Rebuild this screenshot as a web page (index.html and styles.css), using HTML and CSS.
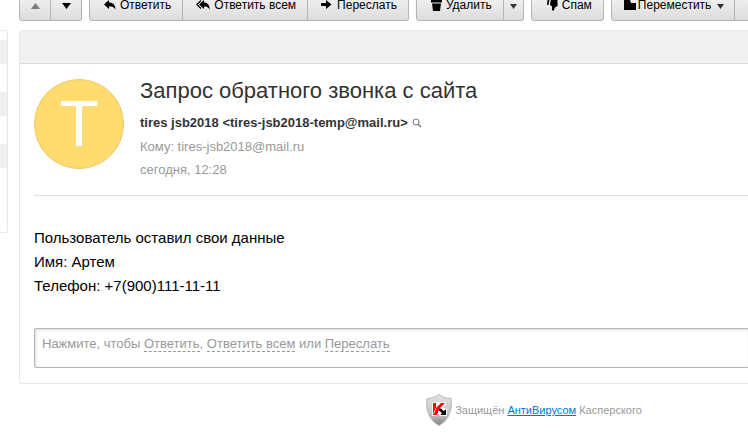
FILE: index.html
```html
<!DOCTYPE html>
<html lang="ru">
<head>
<meta charset="utf-8">
<title>Запрос обратного звонка с сайта</title>
<link rel="stylesheet" href="styles.css">
</head>
<body>
<div class="page">
  <aside class="sidebar">
    <div class="stripe"></div>
    <div class="stripe"></div>
    <div class="stripe"></div>
  </aside>
  <div class="main">
    <div class="toolbar">
      <div class="group">
        <button class="btn btn-nav" aria-label="Предыдущее" disabled><svg width="9" height="6" viewBox="0 0 9 6"><path d="M0 6L4.500 0L9 6Z" fill="#7d7d7d"/></svg></button>
        <button class="btn btn-nav" aria-label="Следующее"><svg width="9" height="6" viewBox="0 0 9 6"><path d="M0 0L4.500 6L9 0Z"/></svg></button>
      </div>
      <div class="group">
        <button class="btn btn-reply"><svg width="12" height="10" viewBox="0 0 12 10"><path d="M0 4.500L5 0V2.500C9 2.500 11.500 5 11.500 9.500C10 7 8 6.500 5 6.500V9Z"/></svg>Ответить</button>
        <button class="btn btn-replyall"><svg width="14" height="10" viewBox="0 0 14 10"><path d="M3 4.500L8 0V2.500C11.500 2.500 13.500 5 13.800 9.500C12 7 10.500 6.500 8 6.500V9Z"/><path d="M5 0.500L0.800 4.500L5 8.500" fill="none" stroke="#000" stroke-width="1.200"/></svg>Ответить всем</button>
        <button class="btn btn-forward"><svg width="11" height="10" viewBox="0 0 11 10"><path d="M0 3H5V0L10.500 4.500L5 9V6H0Z"/></svg>Переслать</button>
      </div>
      <div class="group">
        <button class="btn btn-delete"><svg width="11" height="12" viewBox="0 0 11 12"><path d="M3 0H8V1H11V3.500H0V1H3ZM1 4.500H10L9 12H2Z"/></svg>Удалить</button>
        <button class="btn btn-arrow" aria-label="Другие действия"><svg width="7" height="5" viewBox="0 0 7 5"><path d="M0 0H7L3.500 5Z" fill="#333"/></svg></button>
      </div>
      <div class="group">
        <button class="btn btn-spam"><svg width="11" height="12" viewBox="0 0 11 12"><path d="M0.500 1H2.500L1.500 6H0ZM4 0H10.500V7L8 8.500L6.500 12L5 11V7.500L3 6Z"/></svg>Спам</button>
      </div>
      <div class="group">
        <button class="btn btn-move"><svg width="12" height="10" viewBox="0 0 12 10"><path d="M0 0H6L7 3H12V10H0Z"/></svg>Переместить<svg class="caret" width="7" height="5" viewBox="0 0 7 5"><path d="M0 0H7L3.500 5Z" fill="#333"/></svg></button>
        <button class="btn btn-nav" aria-label="Ещё"></button>
      </div>
    </div>
    <main class="panel">
      <div class="panel-bar"></div>
      <article class="letter">
        <header class="head">
          <div class="avatar">Т</div>
          <div class="info">
            <h1>Запрос обратного звонка с сайта</h1>
            <p class="from">tires jsb2018 &lt;tires-jsb2018-temp@mail.ru&gt;<svg width="10" height="10" viewBox="0 0 10 10"><circle cx="4" cy="4" r="3" fill="none" stroke="#777"/><path d="M6 6L9 9" stroke="#777" stroke-width="1.500"/></svg></p>
            <p class="meta">Кому: tires-jsb2018@mail.ru</p>
            <p class="meta">сегодня, 12:28</p>
          </div>
        </header>
        <div class="body">Пользователь оставил свои данные<br>Имя: Артем<br>Телефон: +7(900)111-11-11</div>
        <div class="reply">Нажмите, чтобы <a href="#">Ответить</a>, <a href="#">Ответить всем</a> или <a href="#">Переслать</a></div>
      </article>
    </main>
    <footer class="footer">
      <svg width="28" height="34" viewBox="0 0 28 34">
        <defs><linearGradient id="shield" x1="0" y1="0" x2="0" y2="1"><stop offset="0" stop-color="#e2e2e2"/><stop offset=".6" stop-color="#c8c8c8"/><stop offset="1" stop-color="#808080"/></linearGradient></defs>
        <path d="M14 1.500C17 4 21 5.500 26 5.500C27.500 17 24 27 14 32.500C4 27 0.500 17 2 5.500C7 5.500 11 4 14 1.500Z" fill="url(#shield)" stroke="#b5b5b5"/>
        <path d="M7 9H21V11L18 15L22 16V23H15L13.500 21L12 23H7Z" fill="#fff"/>
        <path d="M8 10H11V15L16 10H20L14 16L12 22H8Z" fill="#f00"/>
        <path d="M11 15L8.500 21" stroke="#fff" stroke-width=".8"/>
        <path d="M14 15.500L16 15.500L18.500 18L21 16.500V22H15.500L17 20L14 17.500Z"/>
      </svg>
      <span>Защищён <a href="#">АнтиВирусом</a> Касперского</span>
    </footer>
  </div>
</div>
</body>
</html>
```
FILE: styles.css
```css
* { box-sizing: border-box; }
body {
  margin: 0;
  background: #fff;
  color: #000;
  font-family: "Liberation Sans", Arial, sans-serif;
  font-size: 13px;
  overflow: hidden;
}
h1, p { margin: 0; }
.page { display: flex; align-items: flex-start; gap: 11px; }
.sidebar {
  flex: 0 0 8px;
  height: 203px;
  margin-top: 30px;
  padding-top: 9px;
  border: 1px solid #e8e8e8;
  border-left: 0;
  border-radius: 0 3px 3px 0;
}
.stripe { height: 24px; margin-bottom: 28px; background: #f0f0f0; }
.main { flex: 1; min-width: 0; overflow: hidden; }
.toolbar { display: flex; gap: 7px; height: 21px; align-items: flex-end; }
.group { display: flex; flex: none; }
.btn {
  display: flex;
  align-items: center;
  height: 30px;
  padding: 0 11px 2px 13px;
  border: 1px solid #b4b4b4;
  border-left-width: 0;
  background: linear-gradient(#f6f6f6, #dcdcdc);
  color: #000;
  font: 12px "Liberation Sans", Arial, sans-serif;
  white-space: nowrap;
}
.btn:first-child { border-left-width: 1px; border-radius: 3px 0 0 3px; }
.btn:last-child { border-radius: 0 3px 3px 0; }
.btn:only-child { border-radius: 3px; }
.btn svg { flex: none; margin-right: 4px; }
.btn-nav { width: 32px; justify-content: center; padding: 0; }
.btn-nav:last-child { width: 31px; }
.btn-nav svg, .btn-arrow svg { margin: 0; }
.btn-reply { padding-left: 14px; }
.btn-forward svg { margin-right: 5px; }
.btn-arrow { padding: 0 6px; }
.btn-spam { padding-left: 15px; }
.btn-delete { padding-left: 14px; }
.btn-move { padding-left: 12px; padding-right: 10px; }
.btn-move svg { margin-right: 2px; }
.btn svg.caret { margin: 2px 0 0 6px; }
.panel {
  margin-top: 9px;
  border: 1px solid #e8e8e8;
  border-right: 0;
  border-radius: 3px 0 0 3px;
}
.panel-bar { height: 33px; background: #f0f0f0; border-bottom: 1px solid #dcdcdc; }
.letter { padding: 15px 0 15px 14px; }
.head {
  display: flex;
  gap: 16px;
  padding-bottom: 14px;
  border-bottom: 1px solid #e2e2e2;
}
.avatar {
  width: 90px;
  height: 90px;
  flex: none;
  border: 1px solid #ecc967;
  border-radius: 50%;
  background: #ffdb70;
  color: #fff;
  font-size: 64px;
  line-height: 88px;
  text-align: center;
}
.info { white-space: nowrap; }
h1 { font-size: 22px; line-height: 24px; font-weight: 400; color: #333; }
.from {
  display: flex;
  align-items: center;
  gap: 4px;
  margin-top: 8px;
  line-height: 24px;
  font-weight: 700;
  color: #333;
}
.meta { line-height: 23px; color: #999; }
.body { padding: 30px 0; font-size: 15px; line-height: 24px; }
.reply {
  height: 40px;
  padding: 7px;
  border: 1px solid #b4b4b4;
  border-right: 0;
  border-radius: 3px 0 0 3px;
  box-shadow: inset 1px 1px 3px #ddd;
  color: #999;
  line-height: 16px;
}
.reply a { color: #999; text-decoration: none; border-bottom: 1px dashed #999; }
.footer {
  display: flex;
  align-items: center;
  justify-content: center;
  gap: 2px;
  padding: 9px 0 0 300px;
  color: #999;
  font-size: 11px;
}
.footer a { color: #0077cc; }
```
